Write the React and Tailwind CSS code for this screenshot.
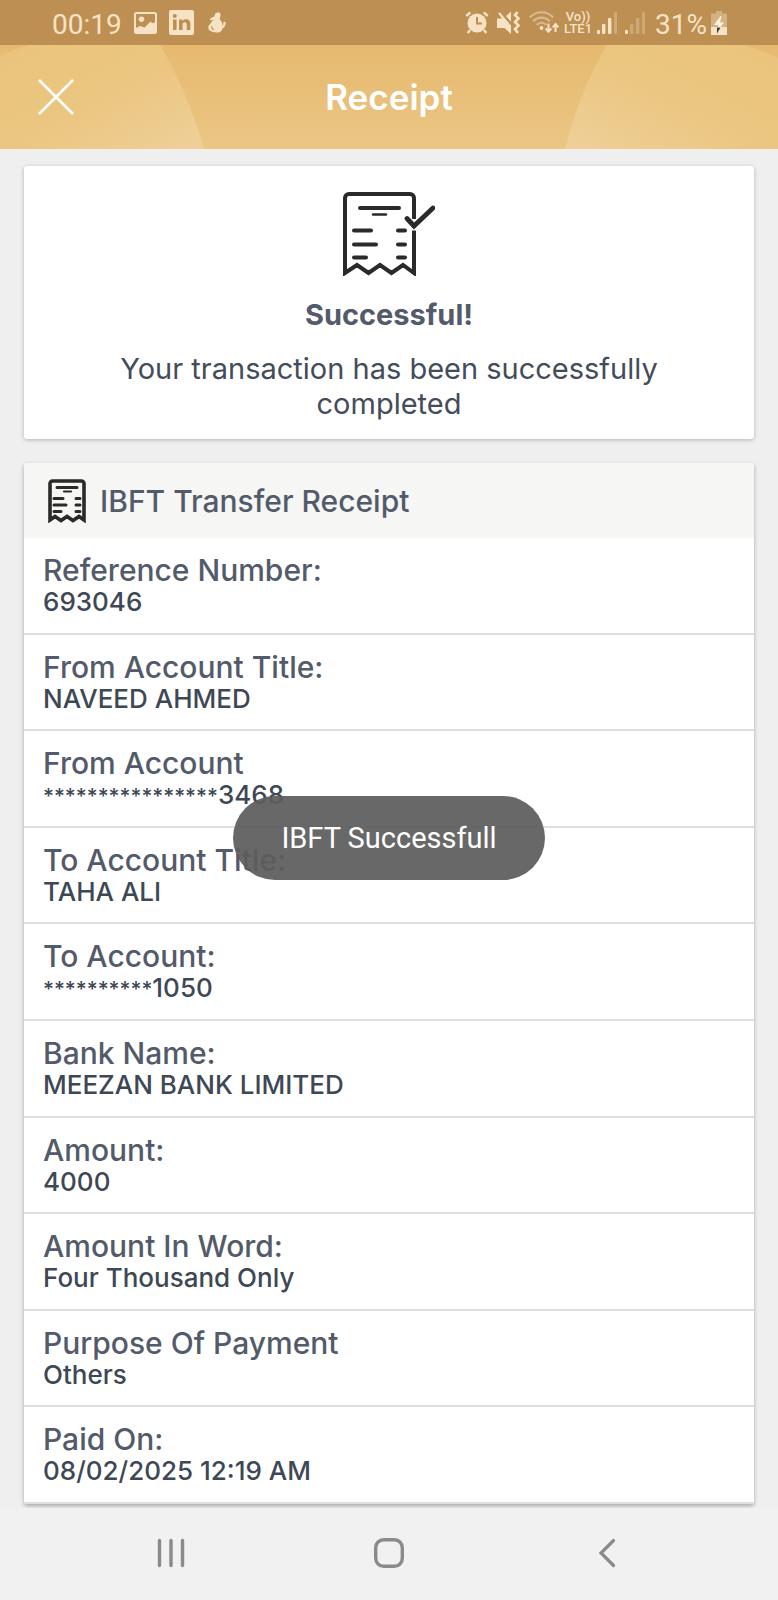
import React from 'react';

const details = [
  { label: 'Reference Number:', value: '693046' },
  { label: 'From Account Title:', value: 'NAVEED AHMED' },
  { label: 'From Account', mask: '****************', value: '3468' },
  { label: 'To Account Title:', value: 'TAHA ALI' },
  { label: 'To Account:', mask: '**********', value: '1050' },
  { label: 'Bank Name:', value: 'MEEZAN BANK LIMITED' },
  { label: 'Amount:', value: '4000' },
  { label: 'Amount In Word:', value: 'Four Thousand Only' },
  { label: 'Purpose Of Payment', value: 'Others' },
  { label: 'Paid On:', value: '08/02/2025 12:19 AM' },
];

function PictureIcon() {
  return (
    <svg className="h-[22px] w-[23px]" viewBox="0 0 23 22" fill="none">
      <rect x="1" y="1" width="21" height="20" rx="1.5" stroke="currentColor" strokeWidth="2" />
      <circle cx="7.5" cy="7.2" r="2.7" fill="currentColor" />
      <path d="M2 16l4-2 4.500 1.500 6-6 1.800 1.800 3.700-1.300V20H2z" fill="currentColor" />
    </svg>
  );
}

function LinkedInIcon() {
  return (
    <svg className="h-[25px] w-[25px]" viewBox="0 0 25 25">
      <rect width="25" height="25" rx="2" fill="currentColor" />
      <g fill="#bd8f52">
        <circle cx="5.8" cy="6" r="2" />
        <path d="M4 9.500h3.600V20H4zM10 9.500h3.400v1.600c.8-1.300 2-1.900 3.600-1.900 3 0 4.300 1.800 4.300 5V20h-3.600v-5.200c0-1.600-.6-2.500-1.900-2.500-1.500 0-2.200 1-2.200 2.600V20H10z" />
      </g>
    </svg>
  );
}

function CreatureIcon() {
  return (
    <svg className="h-[21px] w-[18px]" viewBox="0 0 18 21" fill="currentColor">
      <path d="M9.300.4c2.400-.3 3.700 1.300 3.200 3.500-.2 1.300-.9 2-.7 3 .3 1.400 2.200 2.300 2.500 4.700.2 1.100 0 1.900-.2 2.600 1.300-1 1.500-2.400 1.200-4.100l2.300-.4c.6 4-1.500 6-3.200 6.700-.2 1.400-.9 2.600-2.400 3.700-2.600.8-5.600.6-7.500-.3C2.200 19 .2 17.500.2 15.400c0-1.800 1.300-2.500 2.200-3.700 1-1.400 1.600-3.200 3.500-4.300-1.300.1-2.600.7-4.200.8 0-1.400 1.700-2.900 4.800-3.700C6.400 2.200 7.300.7 9.300.4z" />
      <path d="M3.500 14.200c.1 1.800 1 2.800 2.400 3.500" fill="none" stroke="#bd8f52" strokeWidth="1.200" />
    </svg>
  );
}

function AlarmIcon() {
  return (
    <svg className="h-[23px] w-[24px]" viewBox="0 0 24 23" fill="none">
      <circle cx="12" cy="12" r="9.500" fill="currentColor" />
      <path d="M1.300 5L5.300 1.400M18.700 1.400l4 3.600M5 19l-2.300 3M19 19l2.300 3" stroke="currentColor" strokeWidth="2.400" />
      <path d="M12 6v6.500h5" stroke="#bd8f52" strokeWidth="2" />
    </svg>
  );
}

function VibrateIcon() {
  return (
    <svg className="h-[23px] w-[24px]" viewBox="0 0 24 23" fill="none">
      <path d="M0 7.500h5L1.200 2.600 2.800 1.200 14 14.500V23L7.500 17H0z" fill="currentColor" />
      <path d="M9 5L14 .5v10.300z" fill="currentColor" />
      <path d="M20.500 1l-2.500 3 3.500 3.500L18 11l3.500 3.500L18 18l3 4" stroke="currentColor" strokeWidth="2.600" />
    </svg>
  );
}

function WifiIcon() {
  return (
    <svg className="h-[23px] w-[30px]" viewBox="0 0 30 23" fill="none">
      <g stroke="currentColor" strokeWidth="2.200" opacity=".5">
        <path d="M.8 6.500C7-.5 18-.5 24.200 6.500" />
        <path d="M4.200 10.300c4.500-5 12.100-5 16.600 0" />
        <path d="M7.600 14c2.800-3 7-3 9.800 0" />
      </g>
      <circle cx="12.500" cy="17" r="1.900" fill="currentColor" />
      <path d="M19.500 12.500v8M16.700 17.500l2.800 3.300 2.800-3.300M26.500 21v-7M23.700 16.300l2.800-3.300 2.800 3.300" stroke="currentColor" strokeWidth="2" />
    </svg>
  );
}

function SignalIcon({ strength }) {
  return (
    <svg className="h-[22px] w-[20px]" viewBox="0 0 20 22" fill="currentColor">
      <rect x="0" y="18" width="3" height="4" rx="1" />
      <rect x="5" y="12" width="3.400" height="10" rx="1" opacity={strength > 1 ? 1 : 0.3} />
      <rect x="11" y="6" width="3.400" height="16" rx="1" opacity={strength > 2 ? 1 : 0.3} />
      <rect x="17" y="0" width="3" height="22" rx="1" opacity={strength > 3 ? 1 : 0.3} />
    </svg>
  );
}

function BatteryIcon() {
  return (
    <svg className="h-[24px] w-[16px]" viewBox="0 0 16 24">
      <path d="M5 0h6v2.500h5V16H0V2.500h5z" fill="currentColor" opacity=".4" />
      <path d="M0 16h16v8H0z" fill="currentColor" />
      <path d="M9.500 5L3 14h4.500l-1 3H9l4-5.500H9L10.500 5z" fill="#fff3df" />
      <path d="M6 16.500h3.500L6 22.500z" fill="#3d3a36" />
    </svg>
  );
}

function SuccessIcon() {
  return (
    <svg className="h-[84px] w-[92px]" viewBox="0 0 92 84" fill="none" stroke="#2b2a2a" strokeWidth="4" strokeLinecap="round">
      <path d="M71 27V6a4 4 0 0 0-4-4H6a4 4 0 0 0-4 4v75l12-8 11.500 8L37 73l11.500 8L60 73l11 8V38.500" strokeLinecap="butt" />
      <path d="M17 16h39M11 38.500h17M55 38.500h7M11 52.500h22M55 52.500h7M11 65.500h12M55 65.500h7" />
      <path d="M30 22.500h13" strokeWidth="2.400" />
      <path d="M64 26.500l7 7.500 19-18" strokeWidth="4.800" />
    </svg>
  );
}

function ReceiptIcon() {
  return (
    <svg className="h-[44px] w-[38px]" viewBox="0 0 38 44" fill="none" stroke="#2b2a2a" strokeWidth="3.600" strokeLinecap="round">
      <path d="M2 41V4.500A2.500 2.500 0 0 1 4.500 2h29A2.500 2.500 0 0 1 36 4.500V41l-5-3.500-6 4-6-4-6 4-6-4z" />
      <path d="M9 8.500h20M6 19.500h9M28 19.500h4M6 26h12M28 26h4M6 32.500h7M28 32.500h4" strokeWidth="3" />
      <path d="M16 12.500h7" strokeWidth="2.200" />
    </svg>
  );
}

function StatusBar() {
  return (
    <div className="flex h-[45px] items-center justify-between bg-[#bd8f52] pr-[51px] pl-[52px] font-[Roboto,sans-serif] text-[28px] leading-8 text-[#f6e3c6]">
      <div className="flex items-center gap-3">
        <time className="pt-1">00:19</time>
        <PictureIcon />
        <LinkedInIcon />
        <div className="pl-[2px]">
          <CreatureIcon />
        </div>
      </div>
      <div className="flex items-center gap-2">
        <AlarmIcon />
        <VibrateIcon />
        <div className="flex items-center gap-[5px]">
          <WifiIcon />
          <div className="flex w-[28px] flex-col items-center text-[13px] leading-3 font-medium">
            <span>Vo))</span>
            <span>LTE1</span>
          </div>
          <SignalIcon strength={3} />
        </div>
        <SignalIcon strength={1} />
        <div className="flex items-center gap-1 pl-[2px]">
          <span className="pt-1">31%</span>
          <BatteryIcon />
        </div>
      </div>
    </div>
  );
}

function TitleBar() {
  return (
    <header className="relative grid h-[104px] grid-cols-[56px_1fr_56px] items-center px-7 text-white">
      <svg className="absolute inset-0 h-full w-full" viewBox="0 0 778 104" preserveAspectRatio="none" aria-hidden="true">
        <defs>
          <linearGradient id="base" x1="0" y1="0" x2="0" y2="1">
            <stop offset="0" stopColor="#e6b96f" />
            <stop offset="1" stopColor="#ebc684" />
          </linearGradient>
          <linearGradient id="left" x1="0" y1="0" x2="1" y2="1">
            <stop offset="0" stopColor="#eac47c" />
            <stop offset=".5" stopColor="#ebc680" />
            <stop offset="1" stopColor="#efd09a" />
          </linearGradient>
          <linearGradient id="right" x1="1" y1="0" x2="0" y2="1">
            <stop offset="0" stopColor="#eac47c" />
            <stop offset=".5" stopColor="#ebc680" />
            <stop offset="1" stopColor="#efd09a" />
          </linearGradient>
        </defs>
        <path d="M0 0h778v104H0z" fill="url(#base)" />
        <path d="M0 11Q14 4 28 0H160Q187 45 204 104H0z" fill="url(#left)" />
        <path d="M607 0Q580 45 565 104H778V13Q762 5 744 0z" fill="url(#right)" />
      </svg>
      <button type="button" aria-label="Close" className="relative flex h-14 w-14 items-center justify-center">
        <svg className="h-[36px] w-[36px]" viewBox="0 0 36 36" stroke="currentColor" strokeWidth="2.600">
          <path d="M1 1l34 34M35 1L1 35" />
        </svg>
      </button>
      <h1 className="relative text-center text-[35px] leading-10 font-semibold">Receipt</h1>
    </header>
  );
}

function NavBar() {
  return (
    <nav className="grid h-[92px] grid-cols-[1fr_218px_1fr] items-center bg-[#f1f1f1] px-[62px] pb-[2px] text-[#8a8a8a]">
      <button type="button" aria-label="Recent apps" className="flex h-12 items-center justify-center">
        <svg className="h-[30px] w-[30px]" viewBox="0 0 30 30" stroke="currentColor" strokeWidth="3.400" strokeLinecap="round">
          <path d="M3.500 2.500v25M15 2.500v25M26.500 2.500v25" />
        </svg>
      </button>
      <button type="button" aria-label="Home" className="flex h-12 items-center justify-center">
        <svg className="h-[30px] w-[30px]" viewBox="0 0 30 30" fill="none" stroke="currentColor" strokeWidth="3.400">
          <rect x="1.700" y="1.700" width="26.600" height="26.600" rx="8" />
        </svg>
      </button>
      <button type="button" aria-label="Back" className="flex h-12 items-center justify-center">
        <svg className="h-[30px] w-[18px]" viewBox="0 0 18 30" fill="none" stroke="currentColor" strokeWidth="3.200" strokeLinecap="round">
          <path d="M15.500 2.500L3 15l12.500 12.500" />
        </svg>
      </button>
    </nav>
  );
}

export default function App() {
  return (
    <div className="relative flex min-h-screen flex-col bg-[#efefef] font-[Inter,sans-serif]">
      <StatusBar />
      <TitleBar />
      <main className="flex flex-1 flex-col gap-6 px-6 pt-[17px] pb-1">
        <section className="flex flex-col items-center rounded-[3px] bg-white px-20 pt-[26px] pb-[18px] text-center shadow-[0_1px_4px_rgba(0,0,0,0.25)]">
          <SuccessIcon />
          <h2 className="pt-[19px] text-[29px] leading-10 font-bold text-[#535b6b]">Successful!</h2>
          <p className="pt-4 text-[29px] leading-[35px] text-[#434c5a]">
            Your transaction has been successfully completed
          </p>
        </section>
        <section className="flex flex-1 flex-col rounded-[3px] bg-white shadow-[0_2px_4px_rgba(0,0,0,0.3)]">
          <div className="flex h-[75px] items-center gap-[14px] rounded-t-[3px] bg-[#f6f6f4] px-6">
            <ReceiptIcon />
            <h2 className="text-[30px] leading-9 font-medium text-[#535b6b]">IBFT Transfer Receipt</h2>
          </div>
          <dl className="grid flex-1 auto-rows-fr">
            {details.map(({ label, mask, value }) => (
              <div key={label} className="border-b-2 border-[#dedede] px-[19px] pt-4 pb-3">
                <dt className="text-[30px] leading-8 font-medium text-[#535b6b]">{label}</dt>
                <dd className="text-[26px] leading-8 font-medium text-[#3e4855]">
                  {mask && <span className="text-[21px]">{mask}</span>}
                  {value}
                </dd>
              </div>
            ))}
          </dl>
        </section>
      </main>
      <NavBar />
      <div className="pointer-events-none absolute inset-x-0 top-[796px] flex justify-center">
        <div role="status" className="rounded-full bg-[#5c5c5c]/93 px-12 py-[22px] font-[Roboto,sans-serif] text-[29px] leading-10 text-white">
          IBFT Successfull
        </div>
      </div>
    </div>
  );
}
